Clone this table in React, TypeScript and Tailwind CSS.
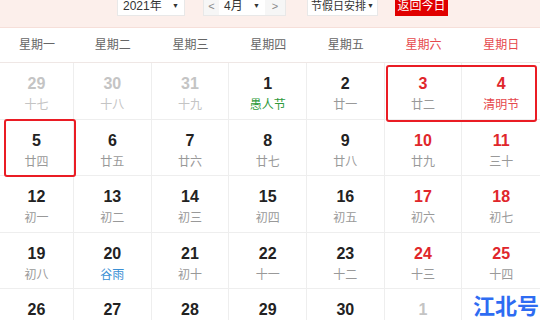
import React from "react";

type Day = { d: number; l: string; other?: boolean; lc?: string };

const days: Day[] = [
  { d: 29, l: "十七", other: true },
  { d: 30, l: "十八", other: true },
  { d: 31, l: "十九", other: true },
  { d: 1, l: "愚人节", lc: "text-[#2f9a3c]" },
  { d: 2, l: "廿一" },
  { d: 3, l: "廿二" },
  { d: 4, l: "清明节", lc: "text-[#e5484d]" },
  { d: 5, l: "廿四" },
  { d: 6, l: "廿五" },
  { d: 7, l: "廿六" },
  { d: 8, l: "廿七" },
  { d: 9, l: "廿八" },
  { d: 10, l: "廿九" },
  { d: 11, l: "三十" },
  { d: 12, l: "初一" },
  { d: 13, l: "初二" },
  { d: 14, l: "初三" },
  { d: 15, l: "初四" },
  { d: 16, l: "初五" },
  { d: 17, l: "初六" },
  { d: 18, l: "初七" },
  { d: 19, l: "初八" },
  { d: 20, l: "谷雨", lc: "text-[#3a8fd4]" },
  { d: 21, l: "初十" },
  { d: 22, l: "十一" },
  { d: 23, l: "十二" },
  { d: 24, l: "十三" },
  { d: 25, l: "十四" },
  { d: 26, l: "十五" },
  { d: 27, l: "十六" },
  { d: 28, l: "十七" },
  { d: 29, l: "十八" },
  { d: 30, l: "十九" },
  { d: 1, l: "劳动节", other: true },
  { d: 2, l: "廿一", other: true },
];

const weeks = ["星期一", "星期二", "星期三", "星期四", "星期五", "星期六", "星期日"];

const font = { fontFamily: 'Arial, "Liberation Sans", "Noto Sans CJK SC", sans-serif' };

export default function App() {
  return (
    <div className="relative w-[540px] h-[320px] overflow-hidden bg-white" style={font}>
      {/* top bar */}
      <div className="h-[28px] bg-[#fcefeb] border-b border-[#f6dfd9] flex items-start">
        <div className="flex items-center mt-[-4px] h-[20px] text-[12px] text-[#333] whitespace-nowrap">
          <div className="ml-[117px] w-[68px] h-[20px] bg-white border border-[#e8e8e8] flex items-center justify-between px-[5px]">
            <span>2021年</span>
            <span className="text-[7px]">▼</span>
          </div>
          <div className="ml-[18px] w-[83px] h-[20px] flex border border-[#e8e8e8]">
            <div className="w-[15px] bg-[#f6f6f6] flex items-center justify-center text-[#888] text-[11px]">&lt;</div>
            <div className="flex-1 bg-white flex items-center justify-between px-[5px]">
              <span>4月</span>
              <span className="text-[7px]">▼</span>
            </div>
            <div className="w-[20px] bg-[#f6f6f6] flex items-center justify-center text-[#888] text-[11px]">&gt;</div>
          </div>
          <div className="ml-[21px] w-[71px] h-[20px] bg-white border border-[#e8e8e8] flex items-center justify-between px-[3px] text-[11px]">
            <span>节假日安排</span>
            <span className="text-[7px]">▼</span>
          </div>
          <div className="ml-[17px] w-[53px] h-[20px] bg-[#e00000] text-white flex items-center justify-center">
            返回今日
          </div>
        </div>
      </div>

      {/* week header */}
      <div className="grid grid-cols-[74px_repeat(6,1fr)] h-[35px] border-b border-[#efe7e5]">
        {weeks.map((w, i) => (
          <div
            key={w}
            className={`flex items-center justify-center text-[12px] ${i >= 5 ? "text-[#e6494d]" : "text-[#666]"}`}
          >
            {w}
          </div>
        ))}
      </div>

      {/* days grid */}
      <div className="relative">
        <div className="grid grid-cols-[74px_repeat(6,1fr)] auto-rows-[56.5px]">
          {days.map((day, i) => {
            const col = i % 7;
            const weekend = col >= 5;
            const numColor = day.other ? "text-[#c4c4c4]" : weekend ? "text-[#e0262b]" : "text-[#222]";
            const lunarColor = day.lc ? day.lc : day.other ? "text-[#c4c4c4]" : "text-[#999]";
            return (
              <div
                key={i}
                className={`flex flex-col items-center pt-[11px] border-b border-[#eeeeee] ${col < 6 ? "border-r" : ""}`}
              >
                <div className={`text-[16px] leading-[20px] font-bold ${numColor}`}>{day.d}</div>
                <div className={`mt-[2px] text-[12px] leading-[18px] ${lunarColor}`}>{day.l}</div>
              </div>
            );
          })}
        </div>

        {/* annotation boxes */}
        <div className="absolute left-[386px] top-[2px] w-[151px] h-[57px] border-2 border-[#ea1c24] rounded-[3px]" />
        <div className="absolute left-[4px] top-[56px] w-[72px] h-[58px] border-2 border-[#ea1c24] rounded-[3px]" />
      </div>

      {/* watermark */}
      <div
        className="absolute left-[472px] top-[290px] text-[22px] leading-[28px] font-bold text-[#2e6cf2] bg-white px-[1px]"
        style={{ fontFamily: '"Noto Sans CJK SC", sans-serif' }}
      >
        江北号
      </div>
    </div>
  );
}
